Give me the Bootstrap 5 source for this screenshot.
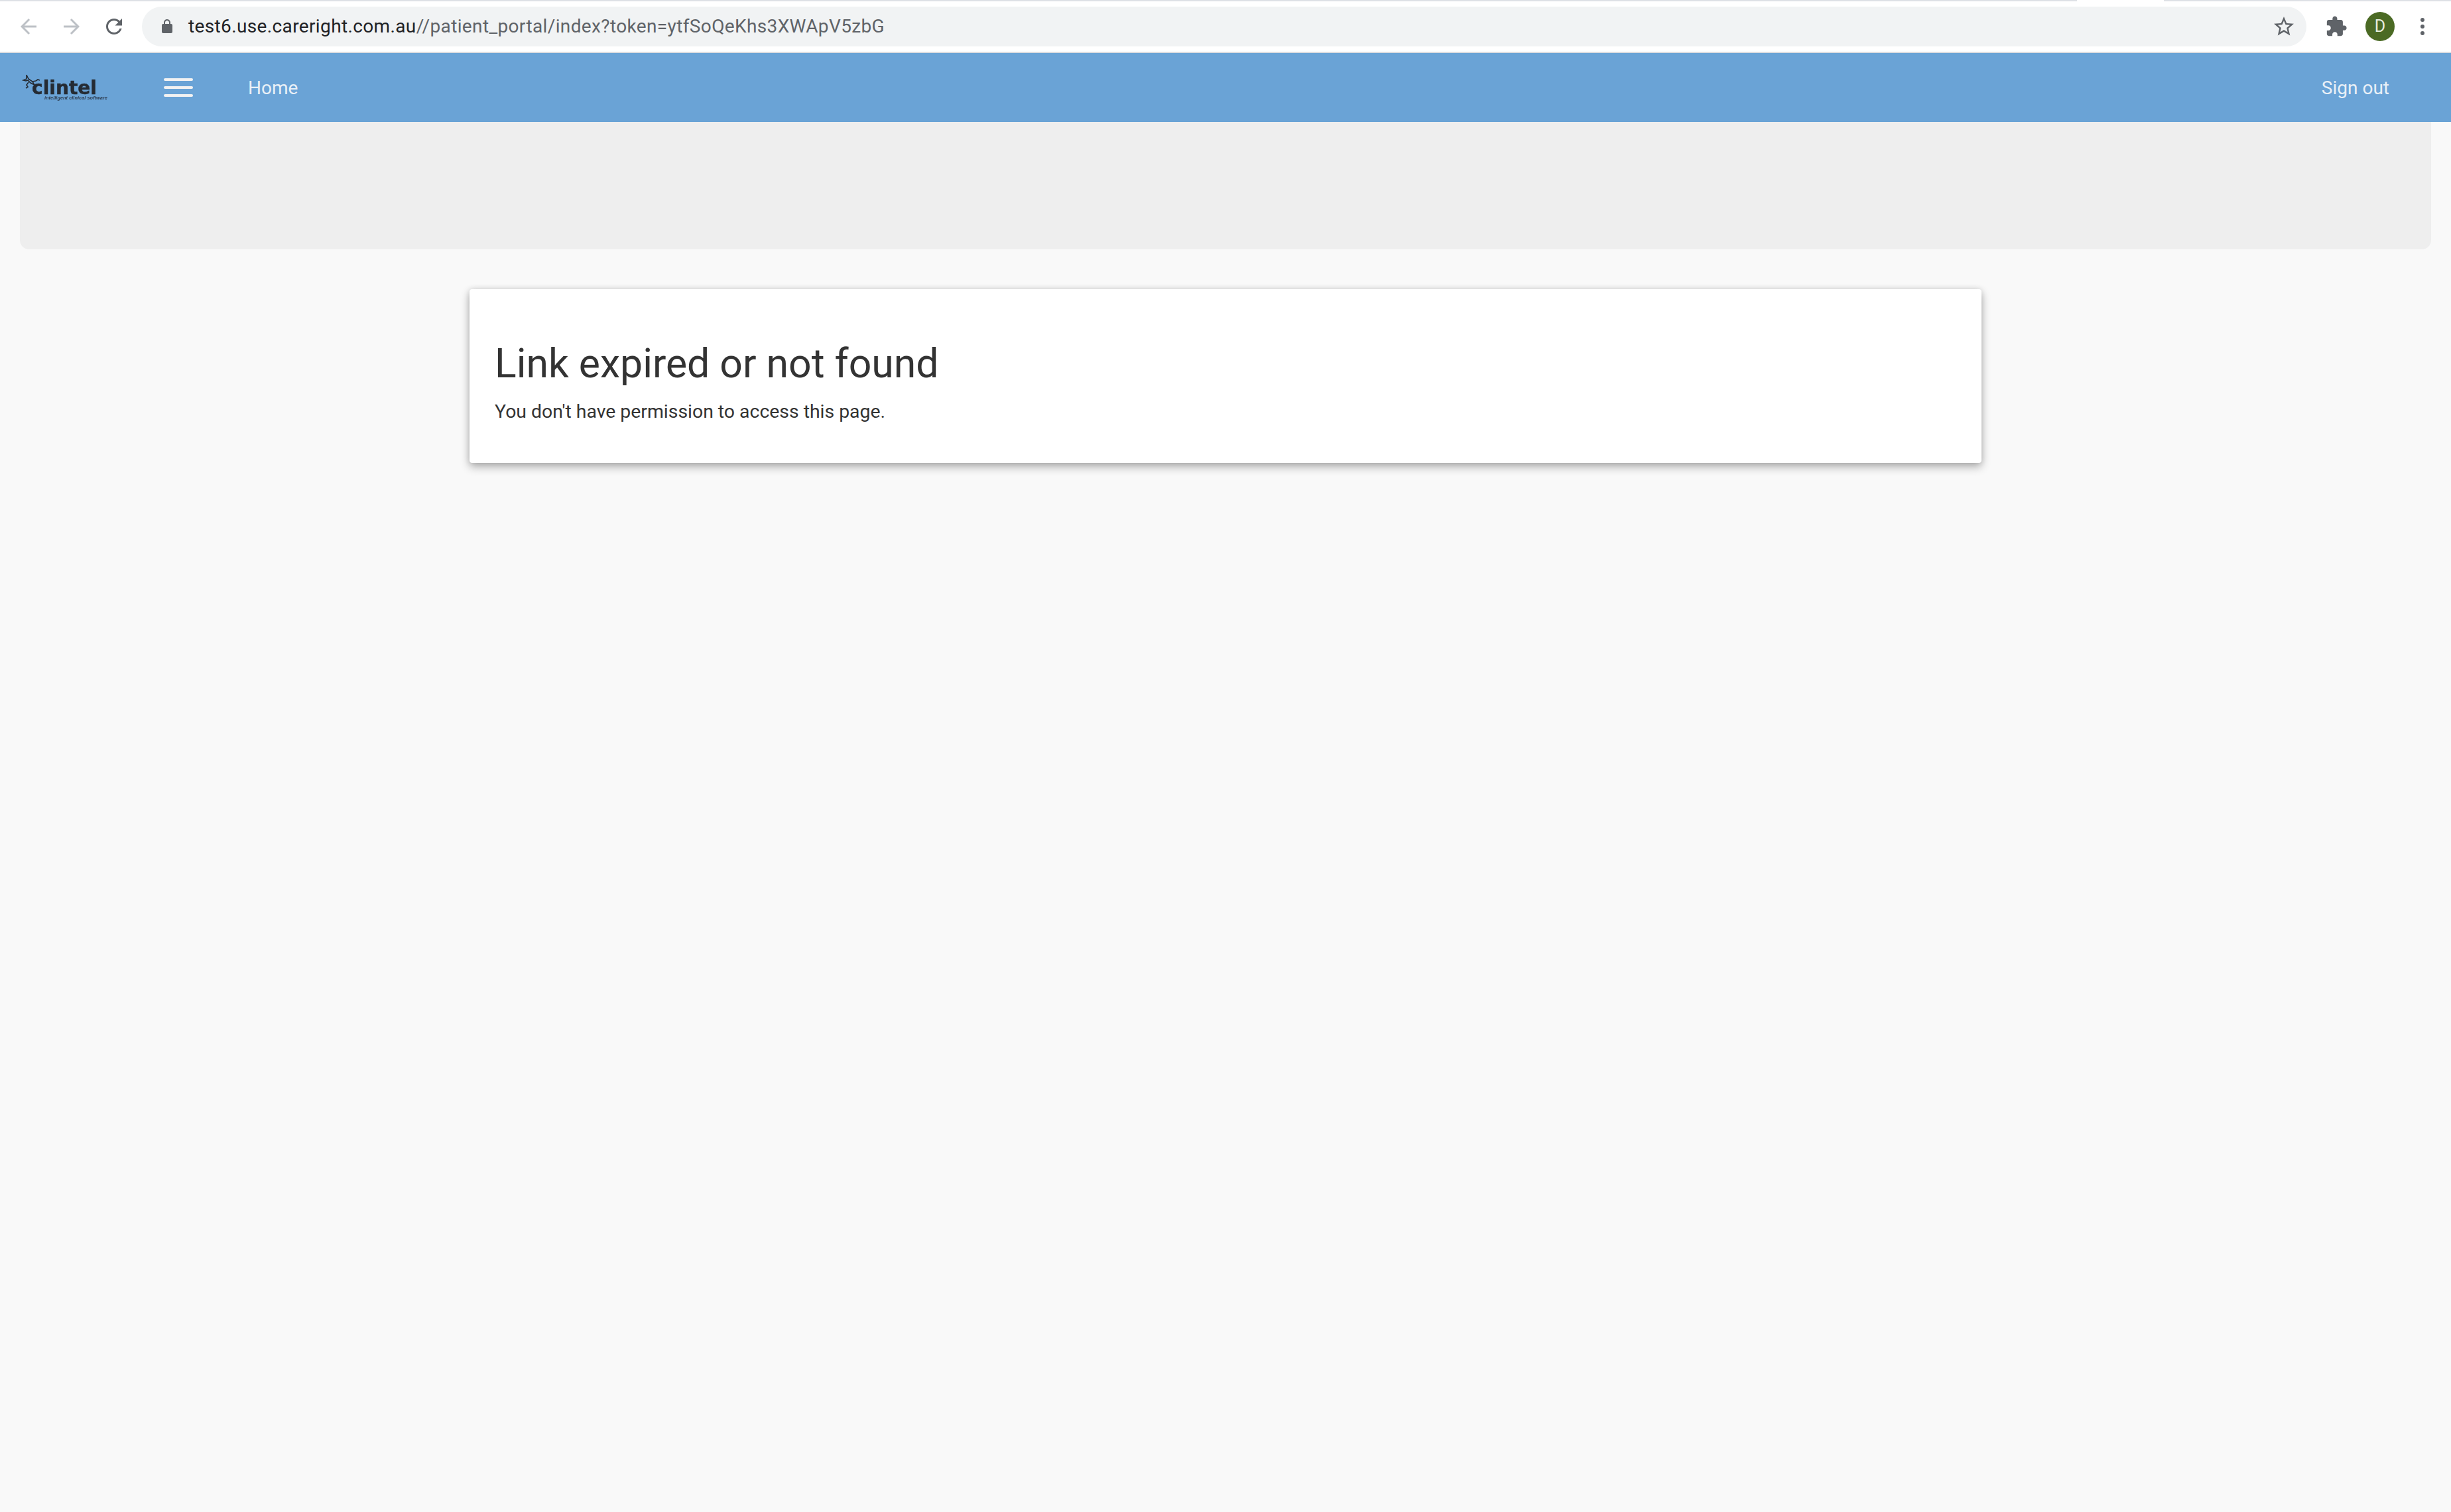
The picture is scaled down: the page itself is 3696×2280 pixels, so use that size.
<!DOCTYPE html>
<html lang="en">
<head>
<meta charset="utf-8">
<title>Link expired or not found</title>
<link href="https://cdn.jsdelivr.net/npm/bootstrap@5.3.0/dist/css/bootstrap.min.css" rel="stylesheet">
<style>
html,body{height:100%}
body{background:#f9f9f9;font-family:Roboto,"Liberation Sans",sans-serif;color:#333;min-height:2280px;overflow:hidden}
.tab-strip{height:2px;background:#dee1e6}
.tab-gap{width:131px;background:#fff;margin-right:433px}
.browser-bar{height:76px;background:#fff;padding-left:30px}
.browser-end{height:2px;background:#dadce0}
.ico{display:block;fill:#5f6368;flex:none}
.ico-off{fill:#bdc1c6}
.ico-back{width:36px;height:36px;margin-left:-5px}
.ico-fwd{width:36px;height:36px;margin-left:29px}
.ico-reload{width:36px;height:36px;margin-left:28px}
.omnibox{width:3264px;height:60px;background:#f1f3f4;border-radius:30px;margin-left:24px;padding:0 16px 0 26px;font-size:28px;letter-spacing:.37px;white-space:nowrap}
.ico-lock{width:24px;height:24px;margin-right:20px}
.url-host{color:#202124}
.url-rest{color:#5f6368}
.ico-star{width:36px;height:36px;margin-left:auto}
.ico-ext{width:34px;height:34px;margin-left:28px}
.avatar{width:44px;height:44px;border-radius:50%;background:#4b6a24;color:#e8eee0;font-size:25px;margin-left:27px}
.ico-more{width:6px;height:26px;margin-left:39px}
.app-nav{height:104px;background:#6aa3d6;padding:0 93px 0 33px}
.app-logo{display:block;width:136px;height:48px;filter:blur(.5px);flex:none}
.menu-btn{width:44px;height:28px;margin-left:78px;padding:0;background:none;border:0;flex:none}
.menu-btn i{display:block;height:4px;background:#f2f2f2;border-radius:2px}
.app-link{font-size:28px;line-height:42px;padding-top:2px;color:#e9f0f7;text-decoration:none}
.app-link-home{margin-left:83px}
.app-link-out{margin-left:auto}
.title-band{height:192px;margin:0 30px;background:#eee;border-radius:0 0 14px 14px}
.msg-card{width:2280px;height:262px;margin:60px auto 0;border:0;border-radius:4px;box-shadow:0 6px 14px rgba(0,0,0,.3),0 0 8px rgba(0,0,0,.12);padding:77px 38px 0}
.msg-title{font-size:60.7px;line-height:72px;font-weight:400;color:#333;margin:0 0 16px}
.msg-text{font-size:28.4px;line-height:40px;color:#333;margin:0}
</style>
</head>
<body>
<div class="tab-strip d-flex justify-content-end"><div class="tab-gap"></div></div>
<div class="browser-bar d-flex align-items-center">
  <svg class="ico ico-off ico-back" viewBox="0 0 24 24"><path d="M20 11H7.83l5.59-5.59L12 4l-8 8 8 8 1.41-1.41L7.83 13H20v-2z"/></svg>
  <svg class="ico ico-off ico-fwd" viewBox="0 0 24 24"><path d="M12 4l-1.41 1.41L16.17 11H4v2h12.17l-5.58 5.59L12 20l8-8z"/></svg>
  <svg class="ico ico-reload" viewBox="0 0 24 24"><path d="M17.65 6.35C16.2 4.9 14.21 4 12 4c-4.42 0-7.99 3.58-7.99 8s3.57 8 7.99 8c3.73 0 6.84-2.55 7.73-6h-2.08c-.82 2.33-3.04 4-5.65 4-3.31 0-6-2.69-6-6s2.69-6 6-6c1.66 0 3.14.69 4.22 1.78L13 11h7V4l-2.35 2.35z"/></svg>
  <div class="omnibox d-flex align-items-center">
    <svg class="ico ico-lock" viewBox="0 0 24 24"><path d="M18 8h-1V6c0-2.76-2.24-5-5-5S7 3.24 7 6v2H6c-1.1 0-2 .9-2 2v10c0 1.1.9 2 2 2h12c1.1 0 2-.9 2-2V10c0-1.1-.9-2-2-2zM9 6c0-1.66 1.34-3 3-3s3 1.34 3 3v2H9V6z"/></svg>
    <span><span class="url-host">test6.use.careright.com.au</span><span class="url-rest">//patient_portal/index?token=ytfSoQeKhs3XWApV5zbG</span></span>
    <svg class="ico ico-star" viewBox="0 0 24 24"><path d="M22 9.24l-7.19-.62L12 2 9.19 8.63 2 9.24l5.46 4.73L5.82 21 12 17.27 18.18 21l-1.63-7.03L22 9.24zM12 15.4l-3.76 2.27 1-4.28-3.32-2.88 4.38-.38L12 6.1l1.71 4.04 4.38.38-3.32 2.88 1 4.28L12 15.4z"/></svg>
  </div>
  <svg class="ico ico-ext" viewBox="0 0 24 24"><path d="M20.5 11H19V7c0-1.1-.9-2-2-2h-4V3.5C13 2.12 11.88 1 10.5 1S8 2.12 8 3.5V5H4c-1.1 0-1.99.9-1.99 2v3.8H3.5c1.49 0 2.7 1.21 2.7 2.7s-1.21 2.7-2.7 2.7H2V20c0 1.1.9 2 2 2h3.8v-1.5c0-1.49 1.21-2.7 2.7-2.7 1.49 0 2.7 1.21 2.7 2.7V22H17c1.1 0 2-.9 2-2v-4h1.5c1.38 0 2.5-1.12 2.5-2.5S21.88 11 20.5 11z"/></svg>
  <div class="avatar d-flex align-items-center justify-content-center">D</div>
  <svg class="ico ico-more" viewBox="0 0 6 26"><circle cx="3" cy="3" r="3"/><circle cx="3" cy="13" r="3"/><circle cx="3" cy="23" r="3"/></svg>
</div>
<div class="browser-end"></div>
<nav class="app-nav d-flex align-items-center">
  <svg class="app-logo" viewBox="0 0 136 48">
    <path d="M7 5l3 6 6 4 3 5-6-3-4-4-3 1-4-1 5-2zM16 15l5-1 3-2 3 1M10 16l-3 4 2 3-3 2" fill="none" stroke="#252b33" stroke-width="1.6"/>
    <text x="15" y="34" font-family="DejaVu Sans" font-weight="700" font-size="29" fill="#252b33" stroke="#252b33" stroke-width=".5" stroke-linejoin="round" textLength="98" lengthAdjust="spacingAndGlyphs">clintel</text>
    <text x="34" y="42" font-family="Liberation Sans" font-style="italic" font-weight="700" font-size="7" fill="#2f3e52" textLength="95" lengthAdjust="spacingAndGlyphs">intelligent clinical software</text>
  </svg>
  <button class="menu-btn d-flex flex-column justify-content-between" type="button" aria-label="Menu"><i></i><i></i><i></i></button>
  <a class="app-link app-link-home" href="#">Home</a>
  <a class="app-link app-link-out" href="#">Sign out</a>
</nav>
<div class="title-band"></div>
<div class="card msg-card">
  <h1 class="msg-title">Link expired or not found</h1>
  <p class="msg-text">You don't have permission to access this page.</p>
</div>
<script src="https://cdn.jsdelivr.net/npm/bootstrap@5.3.0/dist/js/bootstrap.bundle.min.js"></script>
</body>
</html>
